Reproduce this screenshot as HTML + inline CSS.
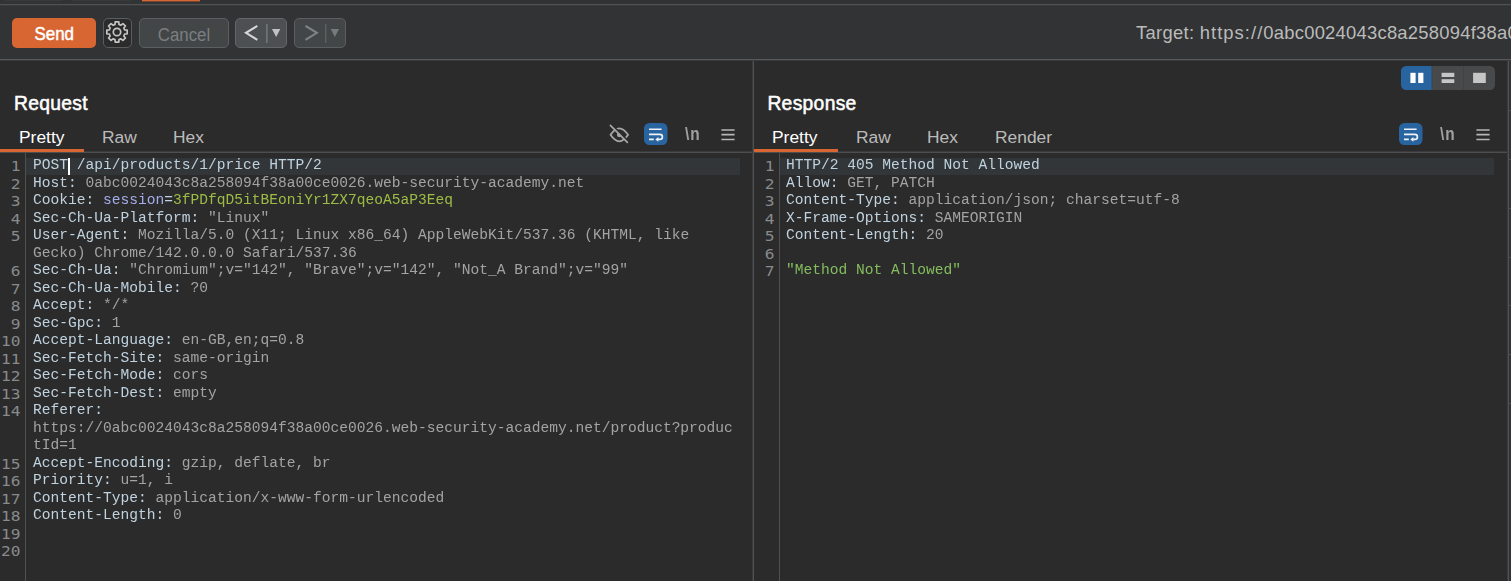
<!DOCTYPE html>
<html lang="en">
<head>
<meta charset="utf-8">
<title>Repeater</title>
<style>
*{box-sizing:border-box;margin:0;padding:0}
html,body{width:1511px;height:581px;overflow:hidden;background:#2b2b2b}
body{position:relative;font-family:"Liberation Sans",sans-serif;color:#bbbbbb}
.abs{position:absolute}
#topstrip{left:0;top:0;width:1511px;height:4px;background:#323334}
.tt{position:absolute;top:0;height:1px;background:#383a3c}
#toptab{left:142px;top:0;width:58px;height:2px;background:linear-gradient(to bottom,#d86633 50%,#744734 50%)}
#topline{left:0;top:4px;width:1511px;height:2px;background:linear-gradient(to bottom,#505254 50%,#383a3b 50%);z-index:1}
#toolbar{left:0;top:5px;width:1511px;height:54px;background:#323334}
#toolline{left:0;top:59px;width:1511px;height:2px;background:linear-gradient(to bottom,#57595a 50%,#3a3b3c 50%);z-index:3}
.btn{position:absolute;top:18px;height:30px;border-radius:5px}
#send{left:12px;width:84px;background:#d86633;color:#fff;font-weight:normal;-webkit-text-stroke:0.5px #fff;font-size:18.2px;text-align:center;line-height:33px}
#send span{display:inline-block;transform:scaleX(.93)}
#gear{left:103px;top:18px;width:29px;height:30px;background:#2b2b2b;border:1px solid #5a5d5f}
#cancel{left:139px;width:90px;background:#424647;border:1px solid #5c5f61;color:#7b7e80;font-size:18px;text-align:center;line-height:32px}
#cancel span{display:inline-block;transform:scaleX(.935)}
#prev{left:235px;width:52px;background:#4c5052;border:1px solid #626668}
#next{left:294px;width:52px;background:#424647;border:1px solid #5c5f61}
#target{left:1136px;top:21px;width:375px;height:24px;overflow:hidden;white-space:nowrap;font-size:18.4px;line-height:24px;letter-spacing:.3px;color:#bbbbbb}
.panel{position:absolute;top:60px;width:753px;height:521px;background:#2b2b2b;overflow:hidden}
#req{left:0}
#res{left:754px}
#t2{letter-spacing:1.05px}
#t3,#t4{letter-spacing:.24px}
#vdiv{left:752px;top:60px;width:2px;height:521px;background:linear-gradient(to right,#393a3b 50%,#4f5153 50%);z-index:2}
#rdiv{left:1507px;top:60px;width:2px;height:521px;background:linear-gradient(to right,#393a3b 50%,#4f5153 50%);z-index:2}
#rstrip{left:1509px;top:60px;width:2px;height:521px;background:#313233}
.rt{left:1509px;width:2px;height:1px;background:#4e5052}
.title{position:absolute;left:14px;top:32px;font-weight:normal;-webkit-text-stroke:0.5px #ffffff;font-size:19.3px;letter-spacing:.3px;line-height:24px;color:#ffffff;white-space:nowrap}
.tab{position:absolute;top:65px;font-size:17.4px;line-height:24px;color:#bbbbbb;white-space:nowrap}
.tab.sel{color:#ffffff}
.uline{position:absolute;left:0;top:89px;width:84px;height:3px;background:#d86633;z-index:1}
.hline{position:absolute;left:0;top:91px;width:753px;height:2px;background:linear-gradient(to bottom,#393a3b 50%,#4c4e50 50%)}
.gutline{position:absolute;left:25px;top:93px;width:1px;height:428px;background:#4e5052}
.hl{position:absolute;left:26px;top:98px;width:714px;height:17px;background:#323639}
.caret{position:absolute;left:68px;top:98px;width:2px;height:17px;background:#ffffff}
.nums{position:absolute;left:0;top:98.2px;width:20.6px;text-align:right;font-family:"DejaVu Sans Mono",monospace;font-size:14.5px;line-height:17.5px;color:#888a8c;white-space:pre;transform:scaleX(1.12);transform-origin:100% 0}
.code{position:absolute;left:33px;top:97px;font-family:"Liberation Mono",monospace;font-size:14.58px;line-height:17.5px;color:#bfd2df;white-space:pre;will-change:transform}
.code i{font-style:normal;color:#a3a3a3}
.code b{font-weight:normal;color:#a4adea}
.code u{text-decoration:none;color:#9dbc46}
.code s{text-decoration:none;color:#84bd5e}
.ico{position:absolute}
</style>
</head>
<body>
<div class="abs" id="topstrip"></div>
<div class="tt" style="left:5px;width:57px"></div><div class="tt" style="left:73px;width:57px"></div>
<div class="abs" id="toptab"></div>
<div class="abs" id="topline"></div>
<div class="abs" id="toolbar"></div>
<div class="abs" id="toolline"></div>

<div class="btn" id="send"><span>Send</span></div>
<div class="btn" id="gear"></div>
<div class="btn" id="cancel"><span>Cancel</span></div>
<div class="btn" id="prev"></div>
<div class="btn" id="next"></div>

<svg class="abs" style="left:102.2px;top:17.3px" width="30" height="30" viewBox="0 0 30 30" fill="none" stroke="#c4c4c4" stroke-width="1.7" stroke-linejoin="round">
<path d="M16.98 7.35 L16.80 4.81 L13.20 4.81 L13.02 7.35 L10.99 8.19 L9.06 6.52 L6.52 9.06 L8.19 10.99 L7.35 13.02 L4.81 13.20 L4.81 16.80 L7.35 16.98 L8.19 19.01 L6.52 20.94 L9.06 23.48 L10.99 21.81 L13.02 22.65 L13.20 25.19 L16.80 25.19 L16.98 22.65 L19.01 21.81 L20.94 23.48 L23.48 20.94 L21.81 19.01 L22.65 16.98 L25.19 16.80 L25.19 13.20 L22.65 13.02 L21.81 10.99 L23.48 9.06 L20.94 6.52 L19.01 8.19Z"/>
<circle cx="15" cy="15" r="3.7"/>
</svg>
<svg class="abs" style="left:235px;top:18px" width="52" height="30" viewBox="235 18 52 30">
<path d="M257.3 25.9 L246 32.8 L257.3 39.8" fill="none" stroke="#d6d6d6" stroke-width="2.1"/>
<rect x="266" y="24" width="1.7" height="19" fill="#6f7375"/>
<path d="M272 29 H280.3 L276.15 37Z" fill="#c2c2c2"/>
</svg>
<svg class="abs" style="left:294px;top:18px" width="52" height="30" viewBox="294 18 52 30">
<path d="M305.5 25.9 L316.8 32.8 L305.5 39.8" fill="none" stroke="#808385" stroke-width="2.1"/>
<rect x="325" y="24" width="1.4" height="19" fill="#5d6062"/>
<path d="M330.7 29 H339 L334.85 37Z" fill="#787b7d"/>
</svg>
<div class="abs" id="target"><span id="t1">Target: </span><span id="t2">https://</span><span id="t3">0abc0024043c8a258094f38a</span><span id="t4">00ce0026.web-security-academy.net</span></div>

<div class="panel" id="req">
<div class="title">Request</div>
<div class="tab sel" style="left:19px">Pretty</div>
<div class="tab" style="left:102px">Raw</div>
<div class="tab" style="left:173px">Hex</div>
<div class="uline"></div>
<div class="hline"></div>
<div class="gutline"></div>
<div class="hl"></div>
<div class="nums">1
2
3
4
5

6
7
8
9
10
11
12
13
14


15
16
17
18
19
20</div>
<div class="code">POST /api/products/1/price HTTP/2
Host: <i>0abc0024043c8a258094f38a00ce0026.web-security-academy.net</i>
Cookie: <b>session</b>=<u>3fPDfqD5itBEoniYr1ZX7qeoA5aP3Eeq</u>
Sec-Ch-Ua-Platform: <i>"Linux"</i>
User-Agent: <i>Mozilla/5.0 (X11; Linux x86_64) AppleWebKit/537.36 (KHTML, like</i>
<i>Gecko) Chrome/142.0.0.0 Safari/537.36</i>
Sec-Ch-Ua: <i>"Chromium";v="142", "Brave";v="142", "Not_A Brand";v="99"</i>
Sec-Ch-Ua-Mobile: <i>?0</i>
Accept: <i>*/*</i>
Sec-Gpc: <i>1</i>
Accept-Language: <i>en-GB,en;q=0.8</i>
Sec-Fetch-Site: <i>same-origin</i>
Sec-Fetch-Mode: <i>cors</i>
Sec-Fetch-Dest: <i>empty</i>
Referer:
<i>https://0abc0024043c8a258094f38a00ce0026.web-security-academy.net/product?produc</i>
<i>tId=1</i>
Accept-Encoding: <i>gzip, deflate, br</i>
Priority: <i>u=1, i</i>
Content-Type: <i>application/x-www-form-urlencoded</i>
Content-Length: <i>0</i>
</div>
<div class="caret"></div>
<svg class="ico" style="left:606px;top:62px" width="26" height="26" viewBox="606 62 26 26" fill="none">
<path d="M610.5 74.8 Q619.3 61.8 628.1 74.8 Q619.3 87.8 610.5 74.8Z" stroke="#a6a6a6" stroke-width="1.8" stroke-linejoin="round"/>
<circle cx="619.3" cy="74.8" r="2.4" fill="#a6a6a6"/>
<path d="M611.6 64.6 L628.6 81.6" stroke="#2b2b2b" stroke-width="1.8"/>
<path d="M610.4 65.4 L627.4 82.4" stroke="#a6a6a6" stroke-width="1.7" stroke-linecap="round"/>
</svg>
<svg class="ico" style="left:644px;top:63px" width="24" height="22" viewBox="644 63 24 22" fill="none">
<rect x="644" y="63" width="23.5" height="22" rx="5.5" fill="#2865a0"/>
<path d="M649 69.2 H661.6 M649 74.4 H659.9 a2.5 2.5 0 0 1 0 5 H657.5 M649 79.4 H653.8" stroke="#eef2f7" stroke-width="1.65"/>
<path d="M655.3 79.4 L658.4 77.1 V81.7Z" fill="#eef2f7"/>
</svg>
<svg class="ico" style="left:682px;top:62px;will-change:transform" width="22" height="24" viewBox="682 62 22 24"><text x="0" y="0" transform="translate(685 79.9) scale(0.875 1)" font-family="Liberation Sans, sans-serif" font-weight="bold" font-size="17.6" letter-spacing="1.2" fill="#a0a0a0">\n</text></svg>
<svg class="ico" style="left:720px;top:66px" width="16" height="16" viewBox="720 66 16 16"><path d="M721.4 70 H734.6 M721.4 74.6 H734.6 M721.4 79.5 H734.6" stroke="#b6b6b6" stroke-width="1.6"/></svg>
</div>

<div class="abs" id="vdiv"></div>

<div class="panel" id="res">
<div class="title" style="left:13.4px">Response</div>
<div class="tab sel" style="left:18px">Pretty</div>
<div class="tab" style="left:102px">Raw</div>
<div class="tab" style="left:173px">Hex</div>
<div class="tab" style="left:241px">Render</div>
<div class="uline"></div>
<div class="hline"></div>
<div class="gutline"></div>
<div class="hl"></div>
<div class="nums">1
2
3
4
5
6
7</div>
<div class="code" style="left:32.4px">HTTP/2 405 Method Not Allowed
Allow: <i>GET, PATCH</i>
Content-Type: <i>application/json; charset=utf-8</i>
X-Frame-Options: <i>SAMEORIGIN</i>
Content-Length: <i>20</i>

<s>"Method Not Allowed"</s>
</div>
<svg class="ico" style="left:647px;top:6px" width="94" height="24" viewBox="0 0 94 24">
<defs><clipPath id="segclip"><rect x="0" y="0" width="94" height="24" rx="5.5"/></clipPath></defs>
<g clip-path="url(#segclip)">
<rect x="0" y="0" width="94" height="24" fill="#414244"/>
<rect x="0" y="0" width="30.5" height="24" fill="#2865a0"/>
<rect x="31.5" y="0" width="30.5" height="24" fill="#48494b"/>
<rect x="63" y="0" width="31" height="24" fill="#48494b"/>
</g>
<rect x="9.4" y="6.8" width="5.2" height="10.2" fill="#ffffff"/>
<rect x="17.2" y="6.8" width="5.2" height="10.2" fill="#ffffff"/>
<rect x="40.6" y="6.8" width="12.7" height="4.2" fill="#c6c6c6"/>
<rect x="40.6" y="13.2" width="12.7" height="3.8" fill="#c6c6c6"/>
<rect x="72.1" y="6.8" width="12.7" height="10.2" fill="#c6c6c6"/>
</svg>
<svg class="ico" style="left:645px;top:63px" width="24" height="22" viewBox="644 63 24 22" fill="none">
<rect x="644" y="63" width="23.5" height="22" rx="5.5" fill="#2865a0"/>
<path d="M649 69.2 H661.6 M649 74.4 H659.9 a2.5 2.5 0 0 1 0 5 H657.5 M649 79.4 H653.8" stroke="#eef2f7" stroke-width="1.65"/>
<path d="M655.3 79.4 L658.4 77.1 V81.7Z" fill="#eef2f7"/>
</svg>
<svg class="ico" style="left:683px;top:62px;will-change:transform" width="22" height="24" viewBox="682 62 22 24"><text x="0" y="0" transform="translate(685 79.9) scale(0.875 1)" font-family="Liberation Sans, sans-serif" font-weight="bold" font-size="17.6" letter-spacing="1.2" fill="#a0a0a0">\n</text></svg>
<svg class="ico" style="left:721px;top:66px" width="16" height="16" viewBox="720 66 16 16"><path d="M721.4 70 H734.6 M721.4 74.6 H734.6 M721.4 79.5 H734.6" stroke="#b6b6b6" stroke-width="1.6"/></svg>
</div>

<div class="abs" id="rstrip"></div>
<div class="abs" id="rdiv"></div>
<div class="abs rt" style="top:110px"></div><div class="abs rt" style="top:159px"></div><div class="abs rt" style="top:208px"></div><div class="abs rt" style="top:257px"></div><div class="abs rt" style="top:305px"></div><div class="abs rt" style="top:354px"></div><div class="abs rt" style="top:403px"></div>
</body>
</html>
